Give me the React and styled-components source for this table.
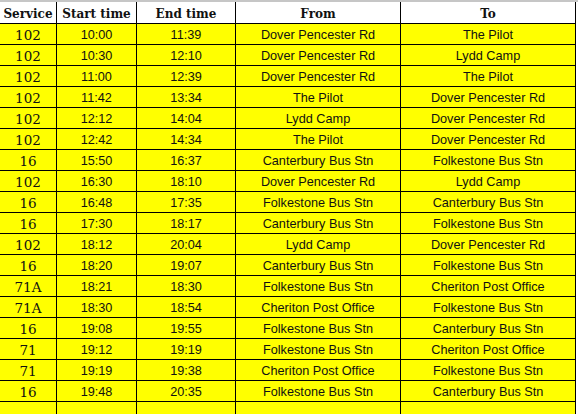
import styled, { createGlobalStyle } from "styled-components"

const GlobalStyle = createGlobalStyle`
  html, body {
    margin: 0;
    padding: 0;
    background: #fff;
  }
`

const rows = [
  ["102", "10:00", "11:39", "Dover Pencester Rd", "The Pilot"],
  ["102", "10:30", "12:10", "Dover Pencester Rd", "Lydd Camp"],
  ["102", "11:00", "12:39", "Dover Pencester Rd", "The Pilot"],
  ["102", "11:42", "13:34", "The Pilot", "Dover Pencester Rd"],
  ["102", "12:12", "14:04", "Lydd Camp", "Dover Pencester Rd"],
  ["102", "12:42", "14:34", "The Pilot", "Dover Pencester Rd"],
  ["16", "15:50", "16:37", "Canterbury Bus Stn", "Folkestone Bus Stn"],
  ["102", "16:30", "18:10", "Dover Pencester Rd", "Lydd Camp"],
  ["16", "16:48", "17:35", "Folkestone Bus Stn", "Canterbury Bus Stn"],
  ["16", "17:30", "18:17", "Canterbury Bus Stn", "Folkestone Bus Stn"],
  ["102", "18:12", "20:04", "Lydd Camp", "Dover Pencester Rd"],
  ["16", "18:20", "19:07", "Canterbury Bus Stn", "Folkestone Bus Stn"],
  ["71A", "18:21", "18:30", "Folkestone Bus Stn", "Cheriton Post Office"],
  ["71A", "18:30", "18:54", "Cheriton Post Office", "Folkestone Bus Stn"],
  ["16", "19:08", "19:55", "Folkestone Bus Stn", "Canterbury Bus Stn"],
  ["71", "19:12", "19:19", "Folkestone Bus Stn", "Cheriton Post Office"],
  ["71", "19:19", "19:38", "Cheriton Post Office", "Folkestone Bus Stn"],
  ["16", "19:48", "20:35", "Folkestone Bus Stn", "Canterbury Bus Stn"],
  ["", "", "", "", ""],
]

const headers = ["Service", "Start time", "End time", "From", "To"]

const App = () => {
  return (
    <>
      <GlobalStyle />
      <Sheet>
        <Grid>
          {headers.map((h) => (
            <HeadCell key={h}>{h}</HeadCell>
          ))}
          {rows.map((r, i) =>
            r.map((v, j) => (
              <Cell key={i + "-" + j} $serif={j === 0}>
                {v}
              </Cell>
            ))
          )}
        </Grid>
      </Sheet>
    </>
  )
}

export default App

const Sheet = styled.div`
  width: 578px;
  height: 414px;
  overflow: hidden;
  border-top: 2px solid #c6c6c6;
  box-sizing: border-box;
  background: #fff;
`

const Grid = styled.div`
  display: grid;
  grid-template-columns: 56px 79px 98px 164px 174px;
  grid-template-rows: 21px;
  grid-auto-rows: 20px;
  gap: 1px;
  width: 575px;
  padding-right: 1px;
  background: #000;
`

const HeadCell = styled.div`
  display: flex;
  align-items: center;
  justify-content: center;
  padding-top: 2px;
  background: #fff;
  font-family: "DejaVu Serif", "Liberation Serif", serif;
  font-weight: bold;
  font-size: 12px;
  color: #111;
  white-space: nowrap;
`

const Cell = styled.div`
  display: flex;
  align-items: center;
  justify-content: center;
  padding-top: 1px;
  background: #ffff00;
  font-family: ${(p) => (p.$serif ? '"DejaVu Serif", "Liberation Serif", serif' : '"Liberation Sans", Arial, sans-serif')};
  font-size: ${(p) => (p.$serif ? "13.5px" : "12.7px")};
  color: #111;
  white-space: nowrap;
`
